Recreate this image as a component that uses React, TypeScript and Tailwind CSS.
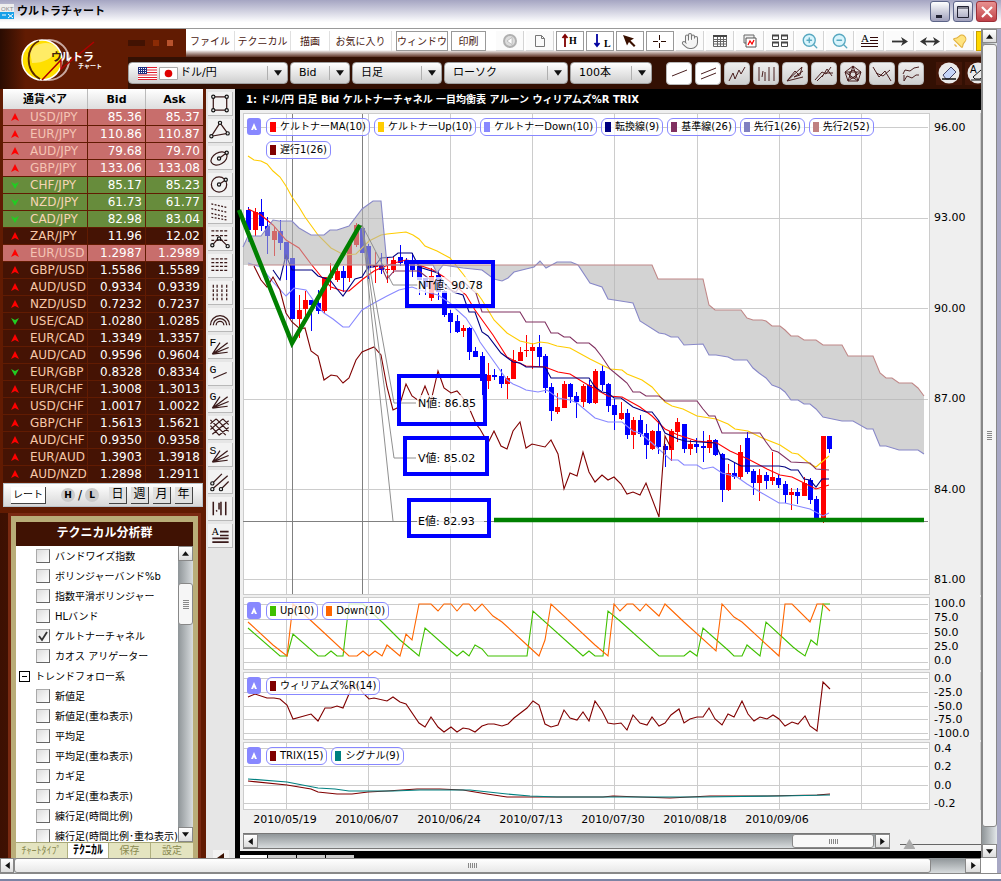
import React, { useState } from 'react';
import { Bell, Hand, ZoomIn, ZoomOut } from 'lucide-react';

type Rate = [pair: string, bid: string, ask: string, dir: 'up' | 'down', tone: 'red' | 'green' | 'dark'];

const RATES: Rate[] = [
  ['USD/JPY', '85.36', '85.37', 'up', 'red'],
  ['EUR/JPY', '110.86', '110.87', 'up', 'red'],
  ['AUD/JPY', '79.68', '79.70', 'up', 'red'],
  ['GBP/JPY', '133.06', '133.08', 'up', 'red'],
  ['CHF/JPY', '85.17', '85.23', 'down', 'green'],
  ['NZD/JPY', '61.73', '61.77', 'down', 'green'],
  ['CAD/JPY', '82.98', '83.04', 'down', 'green'],
  ['ZAR/JPY', '11.96', '12.02', 'up', 'dark'],
  ['EUR/USD', '1.2987', '1.2989', 'up', 'red'],
  ['GBP/USD', '1.5586', '1.5589', 'up', 'dark'],
  ['AUD/USD', '0.9334', '0.9339', 'up', 'dark'],
  ['NZD/USD', '0.7232', '0.7237', 'up', 'dark'],
  ['USE/CAD', '1.0280', '1.0285', 'down', 'dark'],
  ['EUR/CAD', '1.3349', '1.3357', 'up', 'dark'],
  ['AUD/CAD', '0.9596', '0.9604', 'up', 'dark'],
  ['EUR/GBP', '0.8328', '0.8334', 'down', 'dark'],
  ['EUR/CHF', '1.3008', '1.3013', 'up', 'dark'],
  ['USD/CHF', '1.0017', '1.0022', 'up', 'dark'],
  ['GBP/CHF', '1.5613', '1.5621', 'up', 'dark'],
  ['AUD/CHF', '0.9350', '0.9358', 'up', 'dark'],
  ['EUR/AUD', '1.3903', '1.3918', 'up', 'dark'],
  ['AUD/NZD', '1.2898', '1.2911', 'up', 'dark'],
];

const TONES = {
  red: 'bg-[#c86e6c] text-[#f5c4b4]',
  green: 'bg-[#678c3c] text-[#f5d5b4]',
  dark: 'bg-[#451304] text-[#f8c8a8]',
};

const BAND_ITEMS = ['バンドワイズ指数', 'ボリンジャーバンド%b', '指数平滑ボリンジャー', 'HLバンド', 'ケルトナーチャネル', 'カオス アリゲーター'];
const TREND_ITEMS = ['新値足', '新値足(重ね表示)', '平均足', '平均足(重ね表示)', 'カギ足', 'カギ足(重ね表示)', '練行足(時間比例)', '練行足(時間比例･重ね表示)'];

// candle: colour, high, body top, body bottom, low
const CANDLES: [string, number, number, number, number][] = [
  ['b', 207, 210, 230, 242], ['r', 208, 212, 230, 236], ['b', 199, 212, 226, 231], ['b', 217, 226, 236, 254],
  ['r', 227, 231, 240, 256], ['b', 220, 231, 243, 250], ['b', 242, 242, 259, 280], ['b', 258, 258, 319, 319],
  ['r', 295, 310, 319, 338], ['r', 291, 300, 309, 319], ['b', 300, 300, 305, 331], ['b', 290, 303, 311, 314],
  ['r', 277, 277, 311, 314], ['r', 263, 276, 278, 290], ['r', 266, 271, 280, 282], ['b', 266, 271, 278, 292],
  ['r', 244, 244, 278, 282], ['r', 223, 225, 245, 247], ['b', 228, 228, 253, 253], ['b', 244, 246, 268, 279],
  ['r', 252, 265, 267, 283], ['b', 253, 265, 270, 274], ['r', 257, 269, 270, 283], ['r', 257, 260, 270, 273],
  ['b', 245, 257, 263, 266], ['b', 258, 260, 265, 267], ['b', 253, 263, 270, 277], ['b', 265, 266, 280, 295],
  ['b', 278, 278, 287, 295], ['r', 268, 276, 298, 301], ['b', 270, 275, 292, 300], ['b', 290, 291, 315, 317],
  ['b', 310, 313, 322, 333], ['b', 315, 321, 332, 333], ['r', 325, 328, 331, 337], ['b', 327, 328, 352, 360],
  ['b', 347, 351, 357, 357], ['b', 352, 356, 381, 400], ['r', 363, 375, 381, 389], ['b', 369, 375, 377, 380],
  ['b', 369, 376, 384, 388], ['r', 376, 378, 384, 399], ['r', 350, 360, 379, 379], ['r', 347, 352, 361, 361],
  ['r', 335, 350, 351, 357], ['r', 343, 347, 351, 369], ['b', 335, 347, 357, 367], ['b', 354, 356, 388, 393],
  ['b', 383, 387, 411, 421], ['r', 393, 407, 412, 414], ['r', 381, 384, 408, 408], ['b', 383, 384, 397, 403],
  ['b', 392, 396, 402, 418], ['r', 384, 386, 402, 407], ['b', 380, 385, 403, 404], ['r', 369, 371, 403, 404],
  ['b', 365, 371, 385, 391], ['b', 383, 384, 406, 412], ['b', 399, 405, 415, 430], ['r', 402, 413, 419, 420],
  ['b', 409, 413, 435, 439], ['r', 417, 420, 435, 449], ['b', 415, 420, 434, 437], ['b', 424, 433, 445, 459],
  ['r', 430, 431, 449, 450], ['b', 420, 431, 447, 454], ['b', 444, 446, 450, 467], ['r', 429, 431, 450, 461],
  ['r', 418, 422, 432, 442], ['b', 424, 424, 449, 453], ['r', 440, 444, 449, 455], ['b', 438, 444, 447, 453],
  ['b', 431, 446, 448, 462], ['r', 435, 440, 448, 453], ['b', 439, 440, 455, 456], ['b', 453, 454, 490, 502],
  ['r', 464, 473, 490, 491], ['b', 462, 473, 477, 479], ['r', 445, 452, 477, 480], ['b', 432, 438, 472, 474],
  ['b', 469, 471, 483, 495], ['r', 469, 475, 483, 501], ['b', 472, 475, 481, 489], ['r', 452, 477, 481, 485],
  ['b', 475, 478, 485, 488], ['b', 481, 484, 495, 503], ['r', 488, 492, 495, 510], ['b', 488, 492, 496, 504],
  ['r', 477, 483, 496, 496], ['b', 478, 480, 500, 504], ['b', 496, 499, 518, 518], ['r', 436, 436, 519, 523],
  ['b', 436, 436, 449, 453],
];

const LINES: [string, string][] = [
  ['#ffcc00', '248,156 254,160 261,161 267,164 273,171 280,177 286,186 292,197 299,207 305,217 318,235 331,248 344,255 356,254 369,241 381,235 387,234 406,232 413,235 419,239 425,246 437,251 450,258 463,274 475,290 482,300 494,320 507,333 520,341 533,344 540,342 548,343 557,346 570,348 590,359 610,369 622,370 627,374 642,380 652,387 665,402 672,406 683,409 697,416 716,419 728,424 735,429 748,431 760,437 780,445 792,453 798,454 810,464 816,467 823,461 829,456'],
  ['#ff0000', '248,209 261,215 273,225 286,240 299,248 311,264 324,280 331,287 343,291 349,291 363,279 374,271 383,267 394,263 406,260 413,261 419,265 433,270 444,277 457,287 466,295 475,310 493,335 507,357 519,363 526,366 545,367 558,372 570,374 583,382 595,389 608,396 622,397 640,407 652,416 665,429 678,435 697,441 717,443 730,451 748,459 767,469 780,475 792,477 804,483 816,489 829,485'],
  ['#8888ff', '248,263 261,267 273,282 286,296 294,288 306,290 311,297 318,307 324,313 333,319 343,327 349,327 362,310 374,303 387,296 399,290 412,287 426,292 438,295 450,303 457,310 466,318 475,332 480,342 495,363 507,380 513,384 520,387 526,390 538,392 547,390 558,398 570,400 577,403 595,418 608,422 622,422 633,431 640,433 652,443 671,460 678,460 684,465 697,465 703,469 713,467 722,473 737,477 747,484 760,492 779,503 785,503 810,509 823,516 829,513'],
  ['#000080', '273,270 280,280 286,255 292,270 312,270 318,276 330,280 337,289 343,296 355,279 362,277 368,267 374,267 381,258 393,257 398,253 412,253 419,267 438,273 444,283 453,292 463,295 469,312 475,312 482,332 488,336 501,353 513,362 520,363 526,367 545,367 551,378 589,378 595,387 602,392 608,393 614,398 621,398 633,407 646,412 652,412 659,421 665,433 678,439 685,441 715,443 722,459 728,459 741,466 779,466 785,467 791,470 798,470 804,479 810,480 816,487 822,479 829,479'],
  ['#803060', '368,265 381,266 387,279 394,271 419,271 428,278 443,287 456,292 463,281 469,287 476,293 482,312 520,312 526,322 545,322 551,333 558,333 564,337 570,337 577,343 589,343 595,348 602,357 610,369 621,378 627,383 633,392 640,392 646,396 659,396 665,401 697,401 703,409 709,416 715,416 722,433 760,433 766,442 772,450 778,452 791,462 810,463 816,469 829,470'],
  ['#800000', '254,266 261,280 267,287 273,277 280,290 286,313 292,322 300,329 305,328 311,351 318,356 324,380 331,375 337,376 343,383 349,378 356,360 362,352 374,347 381,355 387,387 393,410 399,407 406,384 412,396 419,401 425,386 431,401 438,371 444,388 451,393 457,391 463,398 470,410 476,424 480,429 488,443 494,431 501,446 507,449 513,431 520,422 526,448 532,444 545,447 551,440 558,454 564,489 570,473 577,476 583,452 589,472 595,482 602,475 608,480 614,477 621,484 627,494 633,492 640,495 646,483 659,517 665,436 671,448'],
];

const SPAN1_LEFT = '243,247 248,236 261,236 273,220 279,221 292,221 299,228 311,235 324,235 330,230 337,230 349,226 362,209 373,201 381,201 387,265';
const SPAN1_RIGHT = '433,265 437,273 443,265 463,268 482,270 494,279 502,281 508,278 514,272 526,269 534,267 540,261 546,268 557,262 571,262 578,265 590,283 602,287 608,299 627,302 633,303 640,321 659,333 665,334 671,337 678,337 684,345 703,344 709,355 716,355 728,357 734,360 747,360 753,368 759,373 766,378 772,385 780,388 785,392 791,400 798,400 804,404 810,404 816,409 823,417 842,421 853,421 867,429 873,429 880,446 886,446 899,450 918,450 924,454';
const SPAN2_RIGHT = '924,396 918,388 912,383 899,383 892,378 886,378 880,373 873,356 848,356 842,345 823,345 816,340 804,340 798,336 791,336 785,330 780,326 772,326 766,321 762,320 753,320 747,318 741,310 715,310 709,305 703,279 658,279 652,265 433,265';

const UP = '248,628 280,656 287,656 293,634 318,656 325,656 331,651 337,656 343,656 349,604 363,604 369,610 382,622 400,640 419,656 425,628 451,651 457,656 463,651 469,656 475,645 482,649 488,656 527,656 533,611 573,647 583,656 589,651 595,656 603,656 608,611 620,621 659,656 684,656 690,651 697,656 703,628 729,651 734,656 742,656 747,645 760,656 766,622 793,647 798,651 805,656 811,640 817,645 823,604 830,604';
const DOWN = '248,622 273,645 287,656 293,604 307,617 320,629 349,656 357,656 363,651 369,656 375,651 382,656 387,645 400,656 406,634 412,640 419,604 431,604 438,611 444,604 451,604 457,611 463,604 469,604 475,611 482,604 493,616 502,622 527,645 539,656 545,640 551,604 595,645 608,656 614,604 620,611 627,604 633,604 640,611 646,604 659,616 665,604 684,622 716,651 722,604 734,617 742,622 779,656 785,604 792,604 810,622 817,604 823,604 830,611';
const WILLIAMS = '248,697 255,694 267,698 274,698 280,699 287,705 293,719 311,714 318,721 325,708 331,708 337,706 343,708 352,687 357,684 363,693 369,699 374,698 387,701 393,697 400,702 406,704 419,723 425,727 431,717 438,727 444,732 451,727 457,732 463,728 469,729 475,732 482,726 488,724 494,724 502,726 508,724 514,718 527,708 533,701 539,705 545,724 551,727 558,725 564,710 570,718 577,720 583,712 589,721 595,701 602,711 608,723 614,724 621,723 627,730 633,715 640,723 647,725 652,717 659,726 665,723 671,715 679,709 684,723 690,719 697,717 703,717 709,708 715,719 722,725 728,714 734,717 742,701 748,714 754,721 760,717 767,719 773,715 779,719 785,726 792,722 798,724 805,716 810,726 817,731 823,682 830,689';
const TRIX = '248,781 287,785 311,789 318,792 337,794 352,794 368,792 387,791 417,789 440,789 463,790 487,794 507,797 603,797 613,796 640,797 670,798 710,796 767,796 817,795 830,794';
const SIGNAL = '248,779 287,782 318,788 335,789 349,791 393,791 420,790 470,790 507,794 530,796 557,797 700,797 780,796 830,795';

const GRID_X = [286, 368, 450, 532, 614, 697, 779, 861];
const DATES = ['2010/05/19', '2010/06/07', '2010/06/24', '2010/07/13', '2010/07/30', '2010/08/18', '2010/09/06'];

const TARGETS: [string, number, number, number, number, number][] = [
  ['NT値: 90.78', 405, 260, 90, 48, 289],
  ['N値: 86.85', 397, 374, 90, 52, 407],
  ['V値: 85.02', 403, 436, 86, 40, 462],
  ['E値: 82.93', 407, 498, 84, 40, 525],
];

function Grid({ rows, bottom }: { rows: number[]; bottom: number }) {
  return (
    <g fill="#cccccc" shapeRendering="crispEdges">
      {GRID_X.map((x) => (
        <rect key={x} x={x} y={bottom - 600} width="1" height="600" />
      ))}
      {rows.map((y) => (
        <rect key={y} x="243" y={y} width="100%" height="1" />
      ))}
    </g>
  );
}

function Legend({ items }: { items: [string, string][] }) {
  return (
    <div className="absolute left-[3px] top-[4px] right-[40px] flex items-start gap-1">
      <button aria-label="折りたたみ" className="mr-px flex h-[17px] w-[14px] shrink-0 items-center justify-center rounded-[3px] bg-[#8888ff]">
        <svg width="8" height="8" viewBox="0 0 8 8">
          <path d="M4 0 7 7H5L4 5 3 7H1Z" fill="#fff" />
        </svg>
      </button>
      <ul className="flex flex-wrap gap-x-1 gap-y-[5px]">
        {items.map(([label, color]) => (
          <li key={label} className="flex h-[18px] items-center gap-1 rounded-md border border-[#8888ff] bg-white/75 px-[3px] text-[10px] leading-none whitespace-nowrap">
            <span className="h-[10px] w-[6px]" style={{ backgroundColor: color }} />
            {label}
          </li>
        ))}
      </ul>
    </div>
  );
}

function ChartRow({
  height,
  top,
  labels,
  legend,
  rows,
  axisClass = '',
  children,
}: {
  height: string;
  top: number;
  labels: string[];
  legend: [string, string][];
  rows: number[];
  axisClass?: string;
  children: React.ReactNode;
}) {
  return (
    <section className={`flex ${height}`}>
      <div className="relative min-w-0 flex-1 border border-[#cccccc] bg-white">
        <svg width="100%" height="100%" className="absolute inset-0 overflow-visible">
          <g transform={`translate(-244 ${-top - 1})`}>
            <svg x="244" y={top + 1} width="100%" height="100%">
              <g transform={`translate(-244 ${-top - 1})`}>
                <Grid rows={rows} bottom={top + 600} />
              </g>
            </svg>
            {children}
          </g>
        </svg>
        <Legend items={legend} />
      </div>
      <ul className={`flex w-[51px] flex-col justify-between border-r border-[#cccccc] pl-[4px] text-[11px] leading-[13px] ${axisClass}`}>
        {labels.map((l) => (
          <li key={l}>{l}</li>
        ))}
      </ul>
    </section>
  );
}

function Arrow({ dir, size = 5 }: { dir: 'up' | 'down' | 'left' | 'right'; size?: number }) {
  const d = { up: 'M0 5 3 1 6 5Z', down: 'M0 1H6L3 5Z', left: 'M5 0V6L1 3Z', right: 'M1 0V6L5 3Z' }[dir];
  return (
    <svg width={size} height={size} viewBox="0 0 6 6">
      <path d={d} fill="#111" />
    </svg>
  );
}

function Dropdown({ label, width, pad = 'pl-2', options, children }: { label: string; width: string; pad?: string; options: string[]; children?: React.ReactNode }) {
  return (
    <div className={`relative ${width}`}>
      <select
        aria-label={label}
        className={`block h-[22px] w-full appearance-none rounded-[4px] border border-[#a0a0a0] bg-linear-to-b from-white to-[#cfcfcf] text-[11px] text-black ${pad}`}
      >
        {options.map((o) => (
          <option key={o}>{o}</option>
        ))}
      </select>
      {children}
      <span className="pointer-events-none absolute inset-y-[4px] right-0 flex w-[21px] items-center justify-center border-l border-[#b0b0b0]">
        <Arrow dir="down" size={8} />
      </span>
    </div>
  );
}

const MENUS: [string, string][] = [
  ['ファイル', 'w-[49px] border-r border-[#e0e0e0]'],
  ['テクニカル', 'w-[56px] border-r border-[#e0e0e0]'],
  ['描画', 'w-[39px] border-r border-[#e0e0e0]'],
  ['お気に入り', 'w-[62px] border-r border-[#e0e0e0]'],
  ['ウィンドウ', 'ml-[4px] w-[52px] border border-[#999999]'],
  ['印刷', 'ml-[3px] w-[35px] border border-[#999999]'],
];

const S = { fill: 'none', stroke: '#3a1a1a', strokeWidth: 1.3 };

const TOP_TOOLS: [string, React.ReactNode, string][] = [
  ['戻る', <svg width="20" height="18" viewBox="0 0 20 18"><circle cx="10" cy="9" r="7" fill="#b0b0b0" /><circle cx="10" cy="9" r="5" fill="#dcdcdc" /><path d="M12 5.500v7L7 9Z" fill="#fff" stroke="#999" strokeWidth=".5" /></svg>, 'plain'],
  ['新規', <svg width="20" height="18" viewBox="0 0 20 18"><path d="M5.500 3.500h6l3 3v8h-9ZM11.500 3.500v3h3" fill="#fafafa" stroke="#777" /></svg>, 'plain'],
  ['高値', <svg width="24" height="18" viewBox="0 0 24 18"><path d="M7 15V4M4.500 6 7 3l2.500 3" fill="none" stroke="#800000" strokeWidth="1.8" /><text x="11" y="12" fontFamily="Liberation Serif" fontWeight="bold" fontSize="10">H</text></svg>, 'box'],
  ['安値', <svg width="24" height="18" viewBox="0 0 24 18"><path d="M9 2v11M6.500 11 9 14l2.500-3" fill="none" stroke="#0000a0" strokeWidth="1.8" /><text x="16" y="15" fontFamily="Liberation Serif" fontWeight="bold" fontSize="10">L</text></svg>, 'box'],
  ['選択', <svg width="20" height="18" viewBox="0 0 20 18"><path d="M3 3 14 6.500l-3.500 2 5 5-1.500 1.500-5-5-2 3.500Z" fill="#3a1000" /></svg>, 'box'],
  ['十字', <svg width="20" height="18" viewBox="0 0 20 18"><path d="M3 9.500h5M11 9.500h5M9.500 3v5M9.500 11v5" stroke="#2a0a00" fill="none" /></svg>, 'box'],
  ['移動', <Hand size={18} strokeWidth={1.4} color="#777" fill="#f4f4f4" />, 'plain'],
  ['表', <svg width="18" height="18" viewBox="0 0 18 18"><path d="M2.500 4.500h13v10h-13ZM2.500 7.500h13M2.500 9.500h13M2.500 12h13M6.500 4v10M9.500 4v10M12.500 4v10" fill="none" stroke="#666" /><path d="M2 4h14" stroke="#444" strokeWidth="2" /></svg>, 'plain'],
  ['重ねる', <svg width="18" height="18" viewBox="0 0 18 18"><path d="M3 3h10v8H3Z" fill="#eee" stroke="#666" /><path d="M5 6h10v9H5Z" fill="#fff" stroke="#555" /><path d="m7 13 2-4 2 3 2-4" fill="none" stroke="#f00" strokeWidth="1.3" /></svg>, 'plain'],
  ['並べる', <svg width="18" height="18" viewBox="0 0 18 18"><path d="M1.500 3.500h6v4h-6ZM10.500 3.500h6v4h-6ZM1.500 10.500h6v4h-6ZM10.500 10.500h6v4h-6Z" fill="none" stroke="#444" /><path d="M1 3.500h7M10 3.500h7M1 10.500h7M10 10.500h7" stroke="#444" strokeWidth="2" /></svg>, 'plain'],
  ['拡大', <ZoomIn size={18} strokeWidth={1.8} color="#58a8c0" fill="#d8f4fc" />, 'plain'],
  ['縮小', <ZoomOut size={18} strokeWidth={1.8} color="#58a8c0" fill="#d8f4fc" />, 'plain'],
  ['文字', <svg width="20" height="18" viewBox="0 0 20 18"><text x="1" y="10" fontFamily="Liberation Serif" fontSize="11">A</text><path d="M10 5.500h8M10 8.500h8M1 11.500h17M1 14.500h17" stroke="#300808" strokeWidth="1.2" /></svg>, 'plain'],
  ['矢印', <svg width="20" height="18" viewBox="0 0 20 18"><path d="M2 9.500h14" fill="none" stroke="#333" strokeWidth="1.8" /><path d="M11 5 18 9.500 11 14l2-4.500Z" fill="#333" /></svg>, 'plain'],
  ['両矢印', <svg width="20" height="18" viewBox="0 0 20 18"><path d="M3 9.500h14" fill="none" stroke="#333" strokeWidth="1.8" /><path d="M7 5 0 9.500 7 14 5 9.500ZM13 5l7 4.500-7 4.500 2-4.500Z" fill="#333" /></svg>, 'plain'],
  ['アラート', <Bell size={16} strokeWidth={1.6} color="#e0b040" fill="#ffe480" className="rotate-45" />, 'plain'],
];

const LINE_TOOLS: [string, string, boolean][] = [
  ['トレンドライン', 'M4 13 19 7', true],
  ['平行線', 'M4 11 19 5M4 16 19 10', true],
  ['波動', 'M3 18 7 10 9 16 13 7 15 11 19 4', false],
  ['時間', 'M4 4V18M10 9V18M14 4V18M19 4V18M7 14 8 8', false],
  ['ファン', 'M3 18 18 4 16 12 10 14 19 8M3 18 19 14M3 18 11 8 15 12', false],
  ['ギャン', 'M2 17 9 9 13 11 18 4M4 18 12 10 20 10M9 14 14 6 19 13', false],
  ['ペンタゴン', 'M11 3 19 9 16 18H6L3 9ZM11 3 16 18 3 9H19L6 18ZM11 7 15 10 13.500 15H8.500L7 10Z', false],
  ['サイクル', 'M2 4 8 14 14 8 20 18M5 10 12 13 19 7', false],
  ['チャネル', 'M3 11 5 7 10 8 14 5 19 4M4 18 7 13 12 15 16 12 19 12M4 18V12', false],
];

const SIDE_TOOLS: [string, React.ReactNode][] = [
  ['四角形', <><path d="M5 5H19V19H5Z" {...S} /><Dots at={[[5, 5], [19, 5], [5, 19], [19, 19]]} /></>],
  ['三角形', <><path d="M12 4 20 15 3 18Z" {...S} /><Dots at={[[12, 4], [20, 15], [3, 18]]} /></>],
  ['楕円', <><ellipse cx="11" cy="13" rx="9" ry="6" transform="rotate(-30 11 13)" {...S} /><path d="m11 13 8-6" {...S} /><Dots at={[[11, 13], [19, 7]]} /></>],
  ['円', <><circle cx="11" cy="12" r="8" {...S} /><path d="m11 12 7-5" {...S} /><Dots at={[[11, 12], [18, 7]]} /></>],
  ['斜線群', <path d="M3 4 20 8M3 9l17 4M3 14l17 4M3 18l17 3" {...S} strokeDasharray="2 1.500" />],
  ['リトレースメント', <><path d="M3 4H20M3 9H20M3 14H20" {...S} strokeDasharray="3 1.500" /><path d="m4 19 7-8 9 9" {...S} /><Dots at={[[4, 19], [11, 12], [20, 20]]} /></>],
  ['水平線群', <path d="M3 5H20M3 9H20M3 13H20M3 17H20" {...S} strokeDasharray="3 1.500" />],
  ['垂直線群', <path d="M5 4V20M9 4V20M14 4V20M19 4V20" {...S} strokeDasharray="3 1.500" />],
  ['アーク', <path d="M2 18a10 10 0 0 1 20 0M5 18a7 7 0 0 1 14 0M8 18a4 4 0 0 1 8 0" {...S} />],
  ['Fファン', <Fan letter="F" />],
  ['Gライン', <><Letter>G</Letter><path d="M5 17 19 11" {...S} /></>],
  ['Gファン', <Fan letter="G" />],
  ['Gグリッド', <path d="M2 8 8 3M2 14 15 3M4 19 21 5M11 20l10-8M2 4l16 16M8 3l13 13M2 10l9 10M15 3l6 6" {...S} />],
  ['Sファン', <Fan letter="S" />],
  ['ピッチフォーク', <><path d="M5 13 14 4M5 19 20 6M14 19 21 12" {...S} /><Dots at={[[4, 14], [4, 20], [13, 20]]} /></>],
  ['タイムゾーン', <path d="M5 5V19M13 5V19M18 5V19M8 15l1-1M11 6v7" {...S} strokeWidth={1.6} />],
  ['テキスト', <><text x="3" y="11" fontFamily="Liberation Serif" fontSize="11">A</text><path d="M12 8H21M12 12H21M4 15H21M4 19H21" {...S} strokeWidth={1.8} /></>],
];

function Dots({ at }: { at: number[][] }) {
  return (
    <g fill="#e8e8e8" stroke="#111" strokeWidth="1.2">
      {at.map(([x, y]) => (
        <circle key={`${x}-${y}`} cx={x} cy={y} r="1.7" />
      ))}
    </g>
  );
}

function Letter({ children }: { children: string }) {
  return <text x="1" y="11" fontFamily="Liberation Mono" fontSize="12">{children}</text>;
}

function Fan({ letter }: { letter: string }) {
  return (
    <>
      <Letter>{letter}</Letter>
      <path d="M4 20 12 8M4 20 20 8M4 20 21 13M4 20 20 18" {...S} />
    </>
  );
}

function Header() {
  return (
    <header className="flex h-[60px] overflow-hidden bg-[#611b02]">
      <div className="w-[128px] shrink-0 bg-linear-to-r from-[#2a0c02] to-[#611b02] to-20%">
        <svg width="116" height="60" viewBox="0 29 116 60">
          <ellipse cx="49" cy="60" rx="20" ry="20" fill="none" stroke="#c8a8a0" strokeWidth="2" />
          <circle cx="42" cy="60" r="20" fill="#ffdf00" stroke="#fff" strokeWidth="1.5" />
          <path d="M30 52a16 14 0 0 1 28-3q-8 14-26 14Z" fill="#fff" opacity=".4" />
          <path d="M39 41C26 46 24 70 40 79" fill="none" stroke="#5a2a00" strokeWidth="1.800" />
          <path d="M42 80 61 60V69L94 42" fill="none" stroke="#b00000" strokeWidth="1.500" />
          <g fill="#fff" fontFamily="Noto Sans CJK JP" fontWeight="bold">
            <text x="51" y="61" fontSize="11" fill="#402010">ウ</text>
            <text x="61" y="61" fontSize="11">ルトラ</text>
            <text x="78" y="68" fontSize="6">チャート</text>
          </g>
        </svg>
      </div>
      <div className="min-w-0 flex-1">
        <div className="flex h-[28px]">
          <div className="flex w-[58px] shrink-0 items-center gap-[8px]">
            <span className="h-[6px] w-[17px] bg-[#421202]" />
            <span className="h-[6px] w-[6px] bg-[#8b2b05]" />
            <span className="h-[6px] w-[6px] bg-[#b8532d]" />
          </div>
          <nav className="flex min-w-0 flex-1 items-start overflow-hidden bg-linear-to-b from-white from-75% to-[#5d3528] pt-[2px] text-[10px] text-[#4a1a14]">
            {MENUS.map(([label, cls]) => (
              <button key={label} className={`h-[20px] shrink-0 whitespace-nowrap ${cls}`}>
                {label}
              </button>
            ))}
            <div className="ml-[10px] flex gap-[2px]">
              {TOP_TOOLS.map(([label, icon, kind]) => (
                <button
                  key={label}
                  aria-label={label}
                  className={`flex h-[20px] w-[28px] shrink-0 items-center justify-center ${
                    kind === 'box' ? 'border border-[#999999]' : 'border-r border-b border-[#d4d4d4] bg-[#fbfbfb]'
                  }`}
                >
                  {icon}
                </button>
              ))}
              <button aria-label="通知" className="h-[20px] w-[28px] shrink-0 border border-[#c8a000] bg-[#ffd800]" />
            </div>
          </nav>
        </div>
        <div className="flex h-[32px] items-center gap-[2px] bg-[#331003]">
          <Dropdown label="通貨ペア" width="w-[160px] shrink-0" pad="pl-[51px]" options={['ドル/円']}>
            <svg width="42" height="14" viewBox="0 0 42 14" className="pointer-events-none absolute top-[4px] left-[9px]">
              <path d="M1 1H20V14H1Z" fill="#fff" />
              <path d="M1 1.500H20M1 4H20M1 6.500H20M1 9H20M1 11.500H20M1 13.500H20" stroke="#e02030" strokeWidth="1.2" />
              <path d="M1 1H10V8H1Z" fill="#203080" />
              <path d="M2 2.500H9M2 4.500H9M2 6.500H9" stroke="#fff" strokeDasharray="1 1" />
              <path d="M22.500 1.500H40.500V13.500H22.500Z" fill="#fff" stroke="#aaa" />
              <circle cx="31.500" cy="7.500" r="3.800" fill="#e00000" />
            </svg>
          </Dropdown>
          <Dropdown label="価格" width="w-[60px] shrink-0" options={['Bid']} />
          <Dropdown label="足種" width="w-[90px] shrink-0" options={['日足']} />
          <Dropdown label="チャート種類" width="w-[124px] shrink-0" options={['ローソク']} />
          <Dropdown label="本数" width="w-[82px] shrink-0" options={['100本']} />
          <div className="ml-[12px] flex gap-[3px]">
            {LINE_TOOLS.map(([label, d, light]) => (
              <button
                key={label}
                aria-label={label}
                className={`flex h-[23px] w-[26px] shrink-0 items-center justify-center rounded-[4px] border border-[#b8b8b8] ${
                  light ? 'bg-white' : 'bg-linear-to-b from-[#eeeeee] to-[#cfcfcf]'
                }`}
              >
                <svg width="22" height="21" viewBox="0 0 22 21">
                  <path d={d} fill="none" stroke="#4a2020" strokeWidth="1" />
                </svg>
              </button>
            ))}
          </div>
          <div className="ml-[10px] flex min-w-0 gap-[3px] overflow-hidden">
            <button aria-label="消しゴム" className="flex h-[23px] w-[26px] shrink-0 items-center justify-center bg-[#431608]">
              <svg width="22" height="22" viewBox="0 0 22 22">
                <circle cx="11" cy="11" r="10.5" fill="#eaeaea" />
                <path d="m5 13 8-8 5 5-7 7H8Z" fill="#c4d4f8" stroke="#446" />
                <path d="M4 17h14" stroke="#111" strokeWidth="1.5" />
              </svg>
            </button>
            <button aria-label="文字消去" className="flex h-[23px] w-[26px] shrink-0 items-center justify-center bg-[#431608]">
              <svg width="22" height="22" viewBox="0 0 22 22">
                <circle cx="11" cy="11" r="10.5" fill="#eaeaea" />
                <text x="3" y="11" fontSize="10" fontFamily="Liberation Sans">A</text>
                <path d="m6 15 8-7 4 5-5 4H8ZM4 18h14" fill="none" stroke="#111" />
              </svg>
            </button>
          </div>
        </div>
      </div>
    </header>
  );
}

function RateTable() {
  return (
    <div className="mx-[3px]">
      <table className="w-full border-separate border-spacing-0 text-[12px]">
        <thead>
          <tr className="h-[20px] bg-linear-to-b from-white to-[#dedede] text-[11px] leading-[19px]">
            <th className="w-[85px] border-r border-[#bbbbbb]">通貨ペア</th>
            <th className="w-[58px] border-r border-[#bbbbbb]">Bid</th>
            <th>Ask</th>
          </tr>
        </thead>
        <tbody>
          {RATES.map(([pair, bid, ask, dir, tone]) => (
            <tr key={pair} className={`h-[17px] leading-[16px] ${TONES[tone]}`}>
              <td className="border-r border-b border-[#611b02] p-0">
                <span className="flex items-center gap-[11px] pl-[8px]">
                  <svg width="8" height="8" viewBox="0 0 8 8">
                    {dir === 'up' ? <path d="M4 0 8 8 4 6 0 8Z" fill="#f00" /> : <path d="M4 8 8 1 4 3 0 1Z" fill="#2c2" />}
                  </svg>
                  {pair}
                </span>
              </td>
              <td className="border-r border-b border-[#611b02] p-0 pr-[3px] text-right text-white">{bid}</td>
              <td className="border-b border-[#611b02] p-0 pr-[3px] text-right text-white">{ask}</td>
            </tr>
          ))}
        </tbody>
      </table>
      <div className="flex h-[24px] items-center border border-[#b8c4cc] bg-linear-to-b from-white to-[#d8d8d8] pl-[7px] text-black">
        <button className="h-[17px] w-[35px] border-r border-b border-[#444444] bg-white text-[10px]">レート</button>
        <span className="ml-[15px] flex items-center gap-[3px] text-[12px]">
          <button className="h-[14px] w-[14px] rounded-full bg-[#cccccc] text-[9px] leading-[14px] font-bold">H</button>
          /
          <button className="h-[14px] w-[14px] rounded-full bg-[#cccccc] text-[9px] leading-[14px] font-bold">L</button>
        </span>
        <span className="ml-[10px] flex gap-[4px]">
          {['日', '週', '月', '年'].map((t) => (
            <button key={t} className="h-[17px] w-[18px] border-r border-b border-[#444444] bg-[#e0e0e0] text-[12px] leading-[15px]">
              {t}
            </button>
          ))}
        </span>
      </div>
    </div>
  );
}

function CheckRow({ label, checked, onChange }: { label: string; checked: boolean; onChange: () => void }) {
  return (
    <label className="flex h-[20px] shrink-0 items-center gap-[5px] pl-[20px] whitespace-nowrap">
      <span className="relative h-[14px] w-[14px] shrink-0">
        <input
          type="checkbox"
          checked={checked}
          onChange={onChange}
          className="block h-[14px] w-[14px] appearance-none border border-[#aaaaaa] border-r-[#666666] border-b-[#666666] bg-linear-to-br from-[#dddddd] to-white"
        />
        {checked && (
          <svg width="12" height="12" viewBox="0 0 12 12" className="pointer-events-none absolute top-px left-px">
            <path d="m2 6 3 4 5-8" fill="none" stroke="#333" strokeWidth="1.8" />
          </svg>
        )}
      </span>
      {label}
    </label>
  );
}

function TechnicalPanel() {
  const [active, setActive] = useState<string[]>(['ケルトナーチャネル']);
  const toggle = (name: string) => setActive((a) => (a.includes(name) ? a.filter((n) => n !== name) : [...a, name]));

  return (
    <div className="mt-[6px] flex min-h-0 grow basis-[0px] flex-col bg-linear-to-r from-[#3d1002] via-[#611b02] to-[#611b02] pr-[5px] pl-[8px]">
      <div className="flex min-h-0 grow basis-[0px] flex-col border-x-[3px] border-t-[3px] border-[#7a2a12]">
        <div className="flex min-h-0 grow basis-[0px] flex-col border-x-[5px] border-t-[6px] border-[#b9ad78] bg-white">
          <h2 className="h-[24px] shrink-0 bg-[#401203] text-center text-[12px] leading-[23px] font-bold text-white">テクニカル分析群</h2>
          <div className="flex min-h-0 grow basis-[0px] overflow-hidden">
            <div className="flex min-w-0 flex-1 flex-col overflow-hidden text-[10px]">
              {BAND_ITEMS.map((n) => (
                <CheckRow key={n} label={n} checked={active.includes(n)} onChange={() => toggle(n)} />
              ))}
              <div className="flex h-[20px] shrink-0 items-center gap-[5px] pl-[3px]">
                <button aria-label="閉じる" className="flex h-[11px] w-[11px] items-center justify-center border border-black">
                  <span className="h-px w-[5px] bg-black" />
                </button>
                トレンドフォロー系
              </div>
              {TREND_ITEMS.map((n) => (
                <CheckRow key={n} label={n} checked={active.includes(n)} onChange={() => toggle(n)} />
              ))}
            </div>
            <div className="flex w-[15px] shrink-0 flex-col bg-linear-to-r from-[#8f9598] to-[#d8dcde]">
              <ScrollButton dir="up" className="h-[15px]" />
              <div className="mt-[22px] flex h-[42px] flex-col items-center justify-center gap-px rounded-[3px] border border-[#888888] bg-[#f6f6f6]">
                {[0, 1, 2, 3, 4].map((i) => (
                  <span key={i} className="h-px w-[6px] bg-[#888888]" />
                ))}
              </div>
              <ScrollButton dir="down" className="mt-auto h-[15px]" />
            </div>
          </div>
          <div className="flex h-[16px] shrink-0 border-t border-[#a8a878] bg-[#e4e4c0] text-[10px] leading-[15px] text-[#8a8a50]">
            <button className="w-[51px] whitespace-nowrap">ﾁｬｰﾄﾀｲﾌﾟ</button>
            <button className="flex-1 border-x border-[#b0b080] bg-white text-[12px] font-bold whitespace-nowrap text-black">ﾃｸﾆｶﾙ</button>
            <button className="w-[42px] border-r border-[#b0b080]">保存</button>
            <button className="w-[42px]">設定</button>
          </div>
        </div>
      </div>
    </div>
  );
}

function ScrollButton({ dir, className = '' }: { dir: 'up' | 'down' | 'left' | 'right'; className?: string }) {
  return (
    <button aria-label={dir} className={`flex shrink-0 items-center justify-center border border-[#888888] bg-linear-to-b from-white to-[#dddddd] ${className}`}>
      <Arrow dir={dir} size={7} />
    </button>
  );
}

function Grip() {
  return (
    <span className="flex gap-px">
      {[0, 1, 2, 3, 4].map((i) => (
        <span key={i} className="h-[5px] w-px bg-[#888888]" />
      ))}
    </span>
  );
}

function PriceChart() {
  return (
    <>
      <g fill="#808080" shapeRendering="crispEdges">
        <rect x="292" y="114" width="1" height="480" />
        <rect x="362" y="114" width="1" height="480" />
        <rect x="243" y="521" width="100%" height="1" />
      </g>
      <g shapeRendering="crispEdges">
        {CANDLES.map(([c, high, top, bottom, low], i) => {
          const x = Math.round(248.3 + 6.31 * i);
          return (
            <g key={i} fill={c === 'r' ? '#ff0000' : '#0000ff'}>
              <rect x={x} y={high} width="1" height={low - high} />
              <rect x={x - 2} y={top} width="5" height={Math.max(bottom - top, 1)} />
            </g>
          );
        })}
      </g>
      {LINES.map(([color, points]) => (
        <polyline key={color} points={points} fill="none" stroke={color} strokeWidth="1.1" />
      ))}
      <g fill="#b4b4b4" fillOpacity=".58">
        <polygon points={`${SPAN1_LEFT} 243,265`} />
        <polygon points={`${SPAN1_RIGHT} ${SPAN2_RIGHT}`} />
      </g>
      <g fill="none" strokeWidth="1.1">
        <polyline points={`${SPAN1_LEFT} 433,265 ${SPAN1_RIGHT}`} stroke="#8888c8" />
        <polyline points={`${SPAN2_RIGHT} 248,265`} stroke="#c08888" />
      </g>
      <path d="M362 225 393 285H418M362 225 394 403H416M362 225 394 458H416M362 225 393 521" fill="none" stroke="#909090" />
      <path d="M239 210 292 343 360 225M494 520H924" fill="none" stroke="#008000" strokeWidth="4.500" />
      {TARGETS.map(([label, x, y, w, h, base]) => (
        <g key={label}>
          <rect x="417" y={base - 12} width="67" height="16" fill="#fff" fillOpacity=".75" />
          <rect x={x + 2} y={y + 2} width={w - 4} height={h - 4} fill="none" stroke="#0000ff" strokeWidth="4" />
          <text x="418" y={base} fontSize="11">{label}</text>
        </g>
      ))}
    </>
  );
}

function ChartWindow() {
  return (
    <main className="flex min-w-0 flex-1 flex-col border-l-[5px] border-black bg-[#efefef]">
      <h1 className="h-[21px] overflow-hidden bg-black pl-[6px] text-[10px] leading-[21px] font-bold whitespace-nowrap text-white">
        1: ドル/円 日足 Bid ケルトナーチャネル 一目均衡表 アルーン ウィリアムズ%R TRIX
      </h1>
      <div className="flex flex-col gap-[2px] pt-[3px] pl-[3px]">
        <ChartRow
          height="h-[482px]"
          top={113}
          rows={[127, 218, 308, 399, 489, 579]}
          labels={['96.00', '93.00', '90.00', '87.00', '84.00', '81.00']}
          axisClass="pt-[8px] pb-[9px]"
          legend={[
            ['ケルトナーMA(10)', '#ff0000'],
            ['ケルトナーUp(10)', '#ffcc00'],
            ['ケルトナーDown(10)', '#8888ff'],
            ['転換線(9)', '#000080'],
            ['基準線(26)', '#803060'],
            ['先行1(26)', '#8080c0'],
            ['先行2(52)', '#c08080'],
            ['遅行1(26)', '#800000'],
          ]}
        >
          <PriceChart />
        </ChartRow>
        <ChartRow
          height="h-[73px]"
          top={597}
          rows={[604, 619, 633, 648, 662]}
          labels={['100.0', '75.0', '50.0', '25.0', '0.0']}
          axisClass="pb-[3px]"
          legend={[['Up(10)', '#40c000'], ['Down(10)', '#ff6600']]}
        >
          <g fill="none" strokeWidth="1.1">
            <polyline points={UP} stroke="#40c000" />
            <polyline points={DOWN} stroke="#ff6600" />
          </g>
        </ChartRow>
        <ChartRow
          height="h-[68px]"
          top={672}
          rows={[678, 692, 706, 719, 733]}
          labels={['0.0', '-25.0', '-50.0', '-75.0', '-100.0']}
          legend={[['ウィリアムズ%R(14)', '#800000']]}
        >
          <polyline points={WILLIAMS} fill="none" stroke="#800000" strokeWidth="1.1" />
        </ChartRow>
        <ChartRow
          height="h-[68px]"
          top={742}
          rows={[748, 766, 785, 803]}
          labels={['0.4', '0.2', '0.0', '-0.2']}
          legend={[['TRIX(15)', '#800000'], ['シグナル(9)', '#008080']]}
        >
          <g fill="none" strokeWidth="1.2">
            <polyline points={TRIX} stroke="#800000" />
            <polyline points={SIGNAL} stroke="#008080" />
          </g>
        </ChartRow>
      </div>
      <ul className="flex h-[23px] pl-[4px] text-[11px] leading-[19px]">
        {DATES.map((d) => (
          <li key={d} className="w-[82px] text-center">
            {d}
          </li>
        ))}
      </ul>
      <div className="flex h-[18px] pl-[3px]">
        <div className="flex h-[16px] min-w-0 flex-1 border-y border-[#777777] bg-linear-to-b from-[#8f9598] to-[#d8dcde]">
          <ScrollButton dir="left" className="w-[15px]" />
          <div className="mr-px ml-auto flex w-[82px] items-center justify-center rounded-[3px] border border-[#888888] bg-[#f8f8f8]">
            <Grip />
          </div>
          <ScrollButton dir="right" className="w-[15px]" />
        </div>
        <div className="flex w-[91px] items-center pt-[4px] pl-[10px]">
          <input
            type="range"
            aria-label="表示幅"
            defaultValue={5}
            className="h-[10px] w-full appearance-none bg-[linear-gradient(#666,#666)] bg-[length:100%_1px] bg-center bg-no-repeat [&::-webkit-slider-thumb]:h-[10px] [&::-webkit-slider-thumb]:w-[12px] [&::-webkit-slider-thumb]:appearance-none [&::-webkit-slider-thumb]:bg-[#aaaaaa] [&::-webkit-slider-thumb]:[clip-path:polygon(50%_0,100%_100%,0_100%)]"
          />
        </div>
      </div>
      <div className="flex h-[7px] items-end gap-px bg-black">
        <span className="h-[3px] w-[27px] bg-white" />
        <span className="h-[3px] w-[28px] bg-[#cccccc]" />
        <span className="h-[3px] w-[28px] bg-[#cccccc]" />
        <span className="h-[3px] w-[28px] bg-[#cccccc]" />
      </div>
    </main>
  );
}

export default function App() {
  return (
    <div className="w-full overflow-hidden bg-white font-['DejaVu_Sans','Noto_Sans_CJK_JP',sans-serif] text-black">
      <div className="flex h-[29px] items-start border-b border-[#9a9a9a] bg-linear-to-b from-[#a5a5c2] to-white to-80%">
        <div className="flex h-[24px] flex-1 items-center gap-[3px]">
          <svg width="14" height="16" viewBox="0 0 14 16">
            <rect width="14" height="16" fill="#eeeeee" />
            <text x="1" y="7" fontSize="6" fontFamily="Liberation Sans" fill="#888">OKT</text>
            <rect y="8" width="14" height="7" fill="#18a0e8" />
            <path d="M2 11h4M8 10l5 4M13 10l-5 4" stroke="#fff" />
          </svg>
          <span className="text-[11px] font-bold">ウルトラチャート</span>
        </div>
        <div className="flex gap-[3px] pt-px pr-[4px]">
          <button aria-label="最小化" className="flex h-[21px] w-[20px] items-center justify-center rounded-[3px] border border-[#5c6488] bg-linear-to-b from-white to-[#a0a0bc]">
            <svg width="12" height="12" viewBox="0 0 12 12"><path d="M2 10.500h6" stroke="#223" strokeWidth="3" /></svg>
          </button>
          <button aria-label="最大化" className="flex h-[21px] w-[20px] items-center justify-center rounded-[3px] border border-[#5c6488] bg-linear-to-b from-white to-[#a0a0bc]">
            <svg width="12" height="12" viewBox="0 0 12 12"><path d="M.5 .5h11v11H.5ZM.5 2h11" fill="none" stroke="#223" /></svg>
          </button>
          <button aria-label="閉じる" className="flex h-[21px] w-[21px] items-center justify-center rounded-[3px] border border-[#9c3038] bg-linear-to-b from-[#e89090] to-[#c04048]">
            <svg width="14" height="14" viewBox="0 0 14 14"><path d="m2 2 10 10M12 2 2 12" stroke="#fff" strokeWidth="2.2" /></svg>
          </button>
        </div>
      </div>

      <div className="flex border-r-[4px] border-[#a8a8c4]">
        <div className="min-w-0 flex-1">
          <Header />
          <div className="flex">
            <aside className="flex w-[206px] shrink-0 flex-col bg-[#611b02]">
              <RateTable />
              <TechnicalPanel />
            </aside>
            <div className="flex w-[29px] shrink-0 flex-col items-center gap-[3px] bg-[#e6e6e6] pt-[3px]">
              {SIDE_TOOLS.map(([label, icon]) => (
                <button key={label} aria-label={label} className="h-[24px] w-[25px] border-r border-b border-[#b8b8b8] bg-[#f2f2f2]">
                  <svg width="24" height="23" viewBox="0 0 24 24">
                    {icon}
                  </svg>
                </button>
              ))}
              <svg width="16" height="8" viewBox="0 0 16 8" className="mt-auto bg-[#f2f2f2]">
                <path d="M4 8 11 3V8Z" fill="#3a1000" />
              </svg>
            </div>
            <ChartWindow />
          </div>
        </div>
        <div className="flex w-[16px] shrink-0 flex-col border-l border-[#888888] bg-linear-to-r from-[#8f9598] to-[#e4e8ea]">
          <ScrollButton dir="up" className="h-[14px]" />
          <div className="mt-px flex flex-1 flex-col items-center justify-center gap-px rounded-[3px] border border-[#888888] bg-[#f6f6f6]">
            {[0, 1, 2, 3, 4].map((i) => (
              <span key={i} className="h-px w-[5px] bg-[#888888]" />
            ))}
          </div>
          <ScrollButton dir="down" className="mt-[17px] h-[14px]" />
        </div>
      </div>

      <div className="flex h-[15px] border-r-[4px] border-[#a8a8c4] pr-[16px]">
        <ScrollButton dir="left" className="w-[14px]" />
        <div className="flex flex-1 bg-linear-to-b from-[#8f9598] to-[#d8dcde]">
          <div className="mr-[34px] flex flex-1 items-center justify-center rounded-[3px] border border-[#888888] bg-linear-to-b from-white to-[#e8e8e8]">
            <Grip />
          </div>
        </div>
        <ScrollButton dir="right" className="w-[16px]" />
      </div>
      <div className="h-[8px] border-t border-b-2 border-t-[#888888] border-b-[#7c84a4] bg-white" />
    </div>
  );
}
